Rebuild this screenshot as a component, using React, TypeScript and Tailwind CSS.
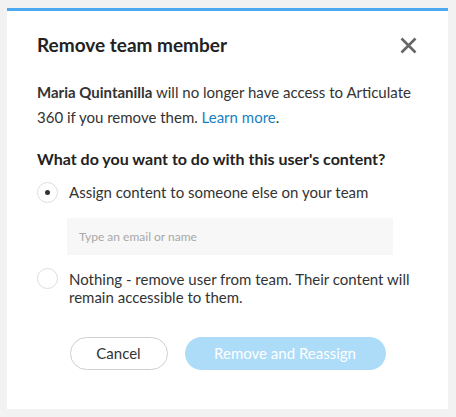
import { useState } from "react"

export default function App() {
  const [choice, setChoice] = useState("assign")

  return (
    <div className="min-h-screen bg-[#f2f2f2] pt-2 pl-[7px] font-['Lato',sans-serif] text-[#333]">
      <div className="w-[441px] border-t-[3px] border-[#4aa9f0] bg-white px-[30px] pt-5 pb-[39px]">
        {/* Header */}
        <div className="flex items-center justify-between">
          <h2 className="text-[19px] leading-[28px] font-bold text-[#222]">Remove team member</h2>
          <button className="mr-[1px] text-[#666]" aria-label="Close">
            <svg width="17" height="17" viewBox="0 0 17 17" fill="none">
              <path d="M1.5 1.5 L15.5 15.5 M15.5 1.5 L1.5 15.5" stroke="currentColor" strokeWidth="2.6" />
            </svg>
          </button>
        </div>

        <p className="mt-[21px] text-[15px] leading-[25px]">
          <span className="font-bold">Maria Quintanilla</span> will no longer have access to Articulate 360 if you
          remove them. <a className="text-[#1a7fc1]">Learn more</a>.
        </p>

        <h3 className="mt-[17px] text-[16px] leading-[24px] font-bold text-[#222]">
          What do you want to do with this user's content?
        </h3>

        {/* Option 1 */}
        <label className="mt-[11px] flex items-start gap-[11px]" onClick={() => setChoice("assign")}>
          <span className="flex h-[21px] w-[21px] shrink-0 items-center justify-center rounded-full border border-[#ddd] bg-white">
            {choice === "assign" && <span className="h-[5px] w-[5px] rounded-full bg-[#333]" />}
          </span>
          <span className="mt-[1px] text-[15px] leading-[18px]">Assign content to someone else on your team</span>
        </label>

        <input
          type="text"
          placeholder="Type an email or name"
          className="mt-[15px] ml-[30px] h-[37px] w-[326px] bg-[#f7f7f7] px-3 text-[12px] text-[#333] outline-none placeholder:text-[#a8a8a8]"
        />

        {/* Option 2 */}
        <label className="mt-[13px] flex items-start gap-[11px]" onClick={() => setChoice("nothing")}>
          <span className="flex h-[21px] w-[21px] shrink-0 items-center justify-center rounded-full border border-[#ddd] bg-white">
            {choice === "nothing" && <span className="h-[5px] w-[5px] rounded-full bg-[#333]" />}
          </span>
          <span className="mt-[2px] text-[15px] leading-[18px]">
            Nothing - remove user from team. Their content will remain accessible to them.
          </span>
        </label>

        {/* Actions */}
        <div className="mt-[31px] flex justify-center gap-[17px]">
          <button className="h-[33px] w-[98px] rounded-full border border-[#cfcfcf] bg-white text-[15px] text-[#333]">
            Cancel
          </button>
          <button className="h-[33px] w-[201px] rounded-full bg-[#addcf9] text-[15px] text-white">
            Remove and Reassign
          </button>
        </div>
      </div>
    </div>
  )
}
